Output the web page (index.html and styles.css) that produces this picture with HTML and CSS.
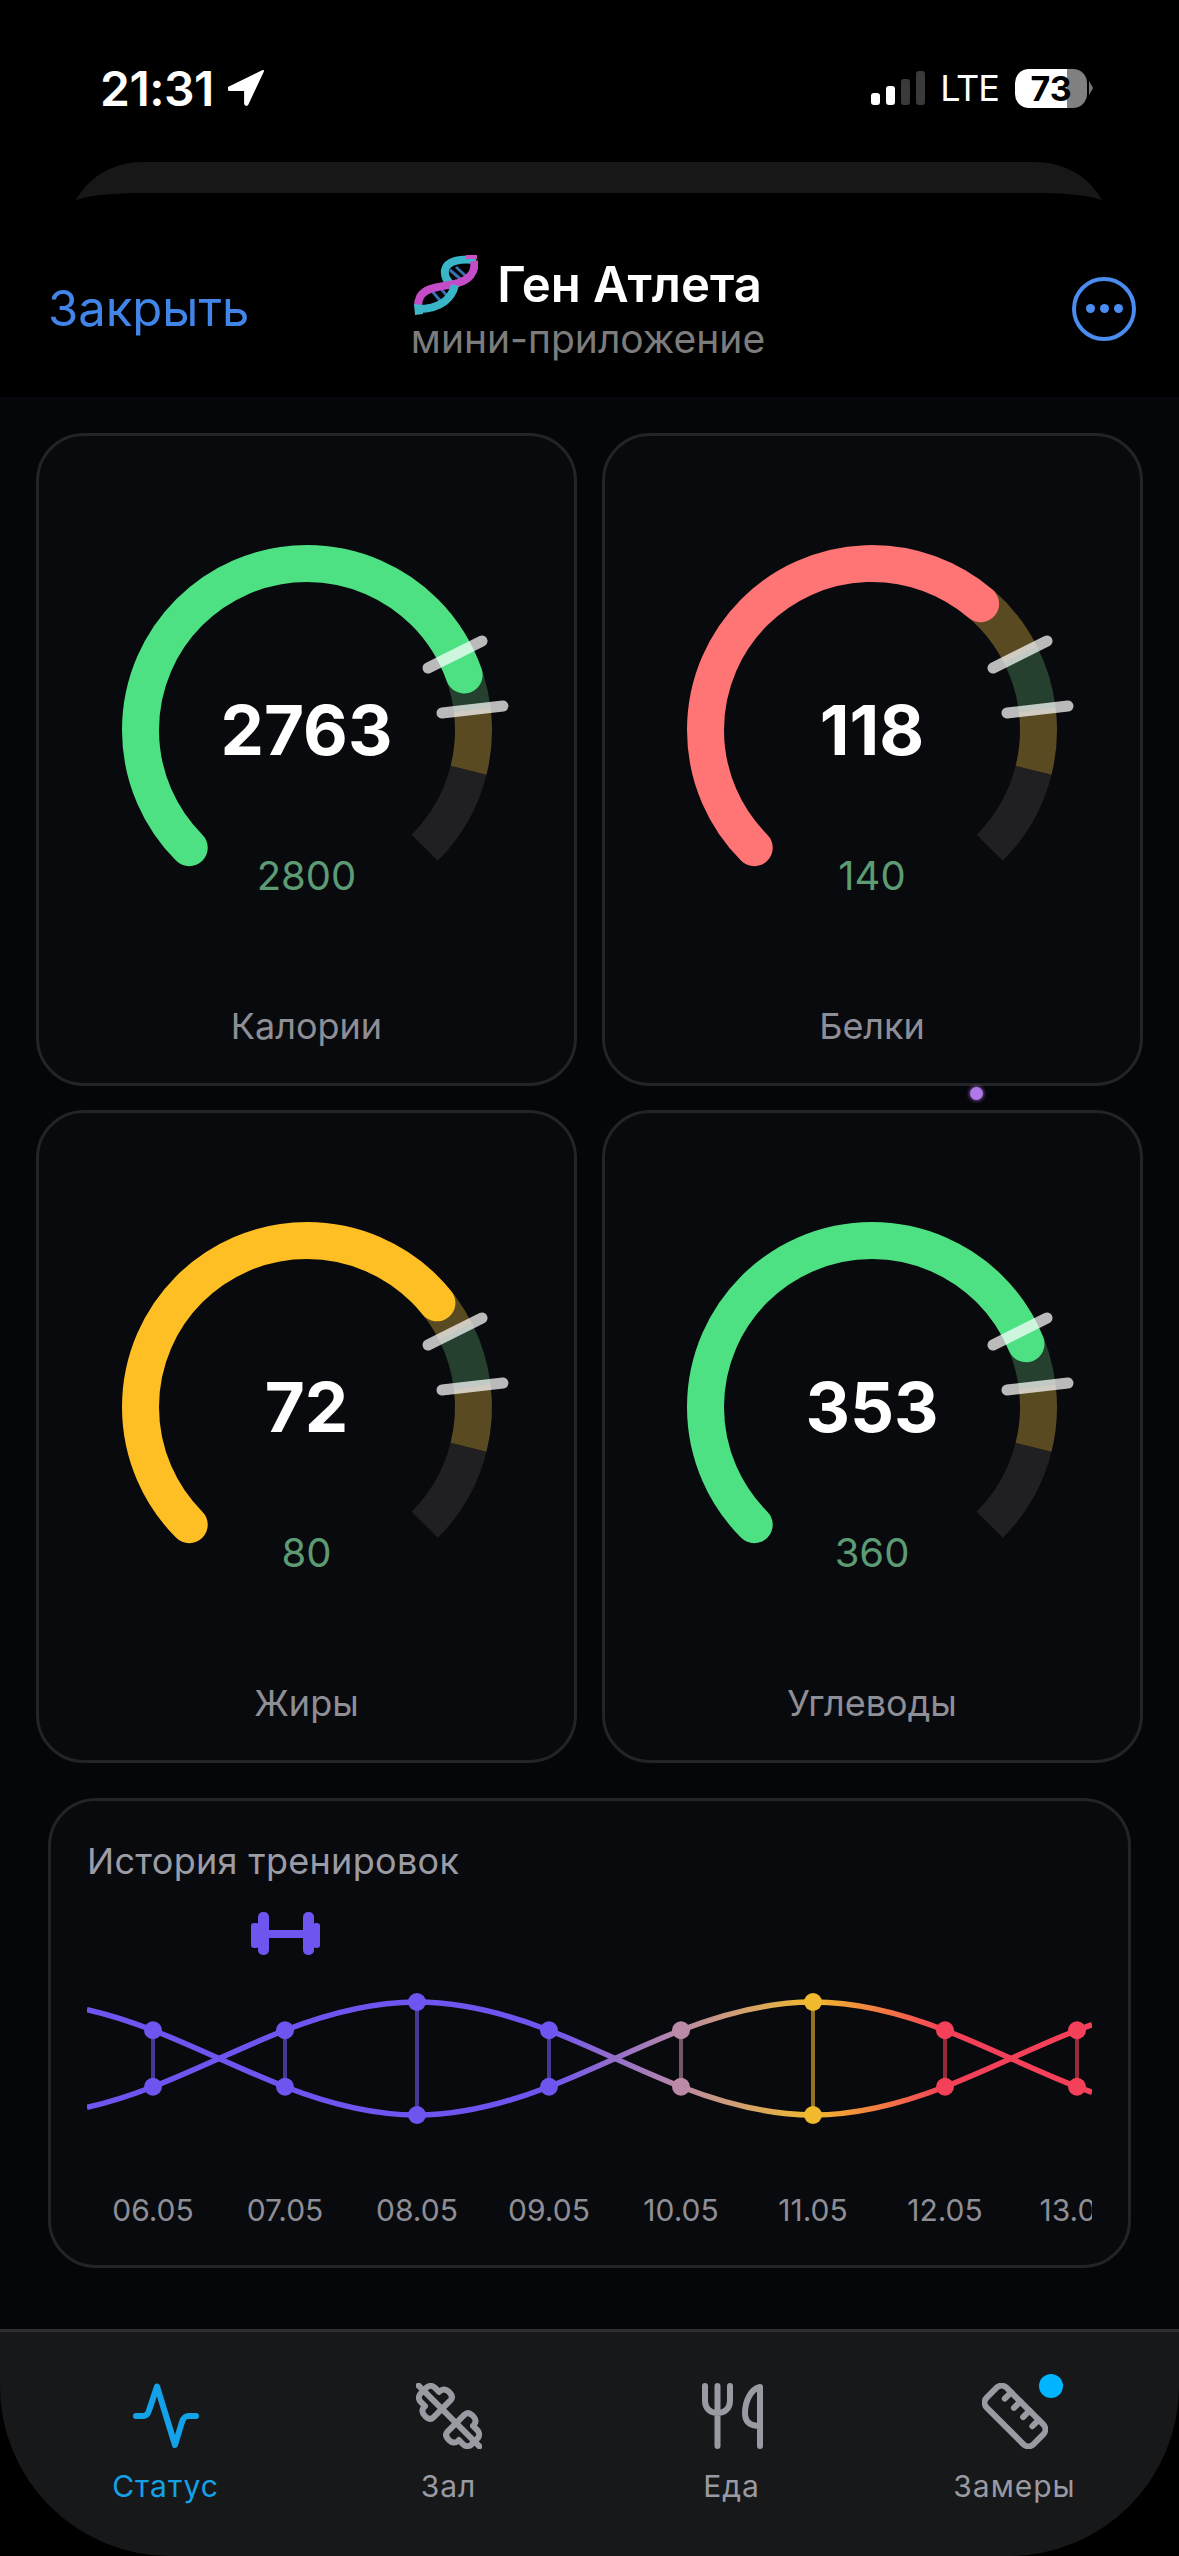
FILE: index.html
```html
<!DOCTYPE html>
<html lang="ru">
<head>
  <meta charset="UTF-8">
  <meta name="viewport" content="width=device-width, initial-scale=1.0">
  <title>Ген Атлета</title>
  <link rel="stylesheet" href="styles.css">
</head>
<body>
  <svg class="defs" width="0" height="0" aria-hidden="true">
    <defs>
      <g id="gauge-track">
        <circle class="arc arc-gray" r="166.5" pathLength="360" stroke-dasharray="31 360" transform="rotate(374)"/>
        <circle class="arc arc-brown" r="166.5" pathLength="360" stroke-dasharray="34 360" transform="rotate(300)"/>
        <circle class="arc arc-green" r="166.5" pathLength="360" stroke-dasharray="20 360" transform="rotate(333)"/>
        <circle class="arc arc-brown" r="166.5" pathLength="360" stroke-dasharray="21 360" transform="rotate(353)"/>
      </g>
      <g id="gauge-ticks">
        <line class="tick" x1="121" y1="-62" x2="175" y2="-89"/>
        <line class="tick" x1="135" y1="-17" x2="196" y2="-24"/>
      </g>
    </defs>
  </svg>

  <div class="status">
    <div class="status-left">
      <span class="time">21:31</span>
      <svg class="arrow" viewBox="0 0 36 36" width="36" height="36"><path d="M35 1 19.500 34c-.6 1.400-2.400 1-2.400-.4V20H2c-1.600 0-2-1.800-.6-2.500Z"/></svg>
    </div>
    <div class="status-right">
      <div class="bars">
        <span class="bar bar-1"></span>
        <span class="bar bar-2"></span>
        <span class="bar bar-3"></span>
        <span class="bar bar-4"></span>
      </div>
      <span class="lte">LTE</span>
      <div class="battery">73</div>
      <span class="battery-tip"></span>
    </div>
  </div>

  <svg class="peek" viewBox="0 0 1026 38" width="1026" height="38"><path d="M0 38C15 12 40 0 68 0H958C986 0 1011 12 1026 38C1010 33 990 31 960 31H66C36 31 16 33 0 38Z"/></svg>

  <header class="header">
    <a class="close">Закрыть</a>
    <div class="title-box">
      <div class="title-row">
        <svg class="dna" viewBox="0 0 64 60" width="64" height="60">
          <path class="dna-rung" d="M36 15 50 27M42 12 55 24M18 36 29 49M26 33 37 45"/>
          <path class="dna-teal" d="M62 5C46 3 33 6 31 15C30 22 34 27 38 30"/>
          <path class="dna-pink" d="M60 6C62 18 54 25 44 28C30 32 12 31 6 42C4 46 4 49 4 52"/>
          <path class="dna-teal" d="M41 30C38 42 28 54 4 54"/>
          <path class="dna-end-pink" d="M52 0H63V4H52Z"/>
          <path class="dna-end-teal" d="M0 49 8 50 9 59 1 60Z"/>
        </svg>
        <span class="title">Ген Атлета</span>
      </div>
      <div class="subtitle">мини-приложение</div>
    </div>
    <div class="more">
      <span class="more-dot"></span>
      <span class="more-dot"></span>
      <span class="more-dot"></span>
    </div>
  </header>

  <main class="main">
    <section class="cards">
      <div class="card">
        <div class="gauge">
          <svg class="gauge-svg" viewBox="-210 -210 420 420" width="420" height="420">
            <use href="#gauge-track"/>
            <circle class="arc value green" r="166.5" pathLength="360" stroke-dasharray="205.700 360" transform="rotate(135)"/>
            <use href="#gauge-ticks"/>
          </svg>
          <div class="gauge-value">2763</div>
          <div class="gauge-target">2800</div>
        </div>
        <div class="card-label">Калории</div>
      </div>
      <div class="card">
        <div class="gauge">
          <svg class="gauge-svg" viewBox="-210 -210 420 420" width="420" height="420">
            <use href="#gauge-track"/>
            <circle class="arc value red" r="166.5" pathLength="360" stroke-dasharray="175.700 360" transform="rotate(135)"/>
            <use href="#gauge-ticks"/>
          </svg>
          <div class="gauge-value">118</div>
          <div class="gauge-target">140</div>
        </div>
        <div class="card-label">Белки</div>
      </div>
      <div class="card">
        <div class="gauge">
          <svg class="gauge-svg" viewBox="-210 -210 420 420" width="420" height="420">
            <use href="#gauge-track"/>
            <circle class="arc value yellow" r="166.5" pathLength="360" stroke-dasharray="186.300 360" transform="rotate(135)"/>
            <use href="#gauge-ticks"/>
          </svg>
          <div class="gauge-value">72</div>
          <div class="gauge-target">80</div>
        </div>
        <div class="card-label">Жиры</div>
      </div>
      <div class="card">
        <div class="gauge">
          <svg class="gauge-svg" viewBox="-210 -210 420 420" width="420" height="420">
            <use href="#gauge-track"/>
            <circle class="arc value green" r="166.5" pathLength="360" stroke-dasharray="202.700 360" transform="rotate(135)"/>
            <use href="#gauge-ticks"/>
          </svg>
          <div class="gauge-value">353</div>
          <div class="gauge-target">360</div>
        </div>
        <div class="card-label">Углеводы</div>
      </div>
      <span class="spark"></span>
    </section>

    <section class="history">
      <div class="history-title">История тренировок</div>
      <svg class="chart" viewBox="0 -85 1005 285" width="1005" height="285">
        <defs>
          <linearGradient id="helix" gradientUnits="userSpaceOnUse" x1="0" y1="0" x2="1005" y2="0">
            <stop offset="0" stop-color="#6f55f0"/>
            <stop offset="0.46" stop-color="#6f55f0"/>
            <stop offset="0.59" stop-color="#b98aa6"/>
            <stop offset="0.722" stop-color="#f0b92e"/>
            <stop offset="0.854" stop-color="#f5405a"/>
            <stop offset="1" stop-color="#f5405a"/>
          </linearGradient>
        </defs>
        <g class="chart-dumbbell">
          <rect x="164" y="-67" width="8" height="25" rx="3"/>
          <rect x="171" y="-78" width="11" height="43" rx="5"/>
          <rect x="181" y="-60" width="36" height="8"/>
          <rect x="216" y="-78" width="11" height="43" rx="5"/>
          <rect x="226" y="-67" width="7" height="25" rx="3"/>
        </g>
        <g class="rungs">
          <line x1="66" y1="40" x2="66" y2="97" stroke="#6f55f0"/>
          <line x1="198" y1="40" x2="198" y2="97" stroke="#6f55f0"/>
          <line x1="330" y1="12" x2="330" y2="125" stroke="#6f55f0"/>
          <line x1="462" y1="40" x2="462" y2="97" stroke="#6f55f0"/>
          <line x1="594" y1="40" x2="594" y2="97" stroke="#b98aa6"/>
          <line x1="726" y1="12" x2="726" y2="125" stroke="#f0b92e"/>
          <line x1="858" y1="40" x2="858" y2="97" stroke="#f5405a"/>
          <line x1="990" y1="40" x2="990" y2="97" stroke="#f5405a"/>
        </g>
        <path class="strand" stroke="url(#helix)" d="M0 117.400C22 112.500 44 105.300 66 96.750C110 79.670 154 57.330 198 40.250C242 23.170 286 12 330 12C374 12 418 23.170 462 40.250C506 57.330 550 79.670 594 96.750C638 113.830 682 125 726 125C770 125 814 113.830 858 96.750C902 79.670 946 57.330 990 40.250L1005 34.700"/>
        <path class="strand" stroke="url(#helix)" d="M0 19.600C22 24.500 44 31.700 66 40.250C110 57.330 154 79.670 198 96.750C242 113.830 286 125 330 125C374 125 418 113.830 462 96.750C506 79.670 550 57.330 594 40.250C638 23.170 682 12 726 12C770 12 814 23.170 858 40.250C902 57.330 946 79.670 990 96.750L1005 102.300"/>
        <g class="nodes" fill="#6f55f0">
          <circle cx="66" cy="40.250" r="9"/><circle cx="66" cy="96.750" r="9"/>
          <circle cx="198" cy="40.250" r="9"/><circle cx="198" cy="96.750" r="9"/>
          <circle cx="330" cy="12" r="9"/><circle cx="330" cy="125" r="9"/>
          <circle cx="462" cy="40.250" r="9"/><circle cx="462" cy="96.750" r="9"/>
        </g>
        <g class="nodes" fill="#bb8aa6">
          <circle cx="594" cy="40.250" r="9"/><circle cx="594" cy="96.750" r="9"/>
        </g>
        <g class="nodes" fill="#f0b92e">
          <circle cx="726" cy="12" r="9"/><circle cx="726" cy="125" r="9"/>
        </g>
        <g class="nodes" fill="#f5405a">
          <circle cx="858" cy="40.250" r="9"/><circle cx="858" cy="96.750" r="9"/>
          <circle cx="990" cy="40.250" r="9"/><circle cx="990" cy="96.750" r="9"/>
        </g>
      </svg>
      <div class="dates">
        <span>06.05</span>
        <span>07.05</span>
        <span>08.05</span>
        <span>09.05</span>
        <span>10.05</span>
        <span>11.05</span>
        <span>12.05</span>
        <span>13.05</span>
      </div>
    </section>
  </main>

  <nav class="tabs">
    <div class="tab active">
      <svg class="tab-icon" viewBox="0 0 66 66" width="66" height="66">
        <path d="M3 33H10C13.500 33 15 31 16 27.500L24 3.500L42 62L49 39C50.500 34.500 52 33 56 33H63"/>
      </svg>
      <span class="tab-label">Статус</span>
    </div>
    <div class="tab">
      <svg class="tab-icon" viewBox="0 0 66 66" width="66" height="66">
        <g transform="rotate(45 33 33)">
          <path d="M43 21C43 17 46 16 50 16C54 16 57 18 57 22V23H63C67 23 69 26 69 29V37C69 40 67 43 63 43H57V44C57 48 54 50 50 50C46 50 43 49 43 45Z"/>
          <path d="M23 21C23 17 20 16 16 16C12 16 9 18 9 22V23H3C-1 23 -3 26 -3 29V37C-3 40 -1 43 3 43H9V44C9 48 12 50 16 50C20 50 23 49 23 45Z"/>
          <path d="M-10 33H76"/>
        </g>
      </svg>
      <span class="tab-label">Зал</span>
    </div>
    <div class="tab">
      <svg class="tab-icon" viewBox="0 0 66 66" width="66" height="66">
        <path d="M6 3V18C6 26 12 30 18.500 30C25 30 31 26 31 18V3M18.500 3V63"/>
        <path d="M61 63V4C52 6 46 18 46 30C46 38 50 43 61 43"/>
      </svg>
      <span class="tab-label">Еда</span>
    </div>
    <div class="tab">
      <svg class="tab-icon" viewBox="0 0 66 66" width="66" height="66">
        <g transform="rotate(45 33 33)">
          <rect x="0" y="19" width="66" height="28" rx="7"/>
          <path d="M13.500 19V28M26.500 19V28M39.500 19V28M52.500 19V28"/>
        </g>
      </svg>
      <span class="tab-label">Замеры</span>
      <span class="badge"></span>
    </div>
  </nav>
</body>
</html>
```

FILE: styles.css
```css
body {
  margin: 0;
  width: 1179px;
  height: 2556px;
  overflow: hidden;
  display: flex;
  flex-direction: column;
  background-color: #000;
  color: #fff;
  font-family: Inter, "Noto Sans", sans-serif;
}
.defs {
  display: none;
}

/* status bar */
.status {
  height: 100px;
  padding: 62px 86px 0 100px;
  display: flex;
  justify-content: space-between;
  flex-shrink: 0;
}
.status-left, .status-right {
  height: 52px;
  display: flex;
  align-items: center;
}
.time {
  font-size: 48px;
  font-weight: 600;
  letter-spacing: -0.5px;
}
.arrow {
  margin-left: 14px;
  fill: #fff;
  stroke: #fff;
  stroke-width: 2;
  stroke-linejoin: round;
}
.bars {
  display: flex;
  align-items: flex-end;
  gap: 6px;
  height: 34px;
}
.bar {
  width: 9px;
  border-radius: 3px;
  background-color: #3a3a3a;
}
.bar-1 {
  height: 12px;
  background-color: #fff;
}
.bar-2 {
  height: 19px;
  background-color: #fff;
}
.bar-3 {
  height: 26px;
}
.bar-4 {
  height: 34px;
}
.lte {
  margin-left: 15px;
  font-size: 36px;
  letter-spacing: -1px;
}
.battery {
  margin-left: 16px;
  width: 72px;
  height: 39px;
  border-radius: 14px;
  background: linear-gradient(to right, #fff 72%, #808080 72%);
  color: #000;
  font-size: 34px;
  font-weight: 700;
  line-height: 39px;
  text-align: center;
}
.battery-tip {
  margin-left: 2px;
  border-left: 4px solid #777;
  border-top: 7px solid transparent;
  border-bottom: 7px solid transparent;
}

/* sheet behind */
.peek {
  display: block;
  margin-left: 76px;
  flex-shrink: 0;
  fill: #171717;
}

/* header */
.header {
  height: 177px;
  padding: 20px 51px 0 48px;
  display: grid;
  grid-template-columns: 1fr auto 1fr;
  align-items: center;
  flex-shrink: 0;
  background-color: #000;
}
.close {
  font-size: 49px;
  color: #4285e8;
}
.title-box {
  display: flex;
  flex-direction: column;
  align-items: center;
}
.title-row {
  display: flex;
  align-items: center;
  gap: 19px;
  height: 60px;
}
.title {
  font-size: 49px;
  font-weight: 600;
}
.subtitle {
  font-size: 39px;
  line-height: 48px;
  color: #7c7c7c;
}
.dna {
  fill: none;
}
.dna-teal {
  stroke: #38b6c8;
  stroke-width: 8;
  fill: none;
}
.dna-pink {
  stroke: #c54cc9;
  stroke-width: 8;
  fill: none;
}
.dna-rung {
  stroke: #3a6fb0;
  stroke-width: 3;
}
.dna-end-teal {
  fill: #3fb6c4;
}
.dna-end-pink {
  fill: #c952c6;
}
.more {
  justify-self: end;
  margin-right: -8px;
  width: 64px;
  height: 64px;
  box-sizing: border-box;
  border: 4px solid #4a8cf0;
  border-radius: 50%;
  display: flex;
  align-items: center;
  justify-content: center;
  gap: 5px;
}
.more-dot {
  width: 9px;
  height: 9px;
  border-radius: 50%;
  background-color: #4a8cf0;
}

/* main content */
.main {
  flex: 1;
  padding: 36px 36px 0;
  background-color: #05060a;
}
.cards {
  position: relative;
  display: grid;
  grid-template-columns: 541px 541px;
  grid-auto-rows: 653px;
  gap: 24px 24.5px;
}
.card {
  box-sizing: border-box;
  padding-top: 84px;
  border: 3px solid #232427;
  border-radius: 48px;
  background-color: #090a0d;
  display: flex;
  flex-direction: column;
  align-items: center;
}
.gauge {
  position: relative;
  width: 420px;
  height: 420px;
}
.gauge-svg {
  display: block;
}
.arc {
  fill: none;
  stroke-width: 37;
}
.arc-gray {
  stroke: #202022;
}
.arc-brown {
  stroke: #5a4a22;
}
.arc-green {
  stroke: #25402f;
}
.value {
  stroke-linecap: round;
}
.green {
  stroke: #4de184;
}
.red {
  stroke: #ff7474;
}
.yellow {
  stroke: #fdbf24;
}
.tick {
  stroke: rgba(255, 255, 255, 0.72);
  stroke-width: 11;
  stroke-linecap: round;
}
.gauge-value {
  position: absolute;
  left: 0;
  right: 0;
  top: 0;
  line-height: 420px;
  text-align: center;
  font-size: 69px;
  font-weight: 700;
}
.gauge-target {
  position: absolute;
  left: 0;
  right: 0;
  top: 332px;
  line-height: 48px;
  text-align: center;
  font-size: 40px;
  color: #5c9b74;
}
.card-label {
  margin-top: 64px;
  font-size: 36px;
  line-height: 44px;
  color: #8e8e96;
}
.spark {
  position: absolute;
  left: 934px;
  top: 654px;
  width: 13px;
  height: 13px;
  border-radius: 50%;
  background-color: #b078e8;
  box-shadow: 0 0 4px #b078e8;
}

/* history */
.history {
  box-sizing: border-box;
  width: 1083px;
  height: 470px;
  margin: 35px 0 0 12px;
  padding: 38px 36px 0;
  border: 3px solid #232427;
  border-radius: 48px;
  background-color: #090a0d;
}
.history-title {
  font-size: 36px;
  line-height: 44px;
  letter-spacing: 0.3px;
  color: #9c9ca6;
}
.chart {
  display: block;
  margin-top: 22px;
  filter: blur(0.7px);
}
.chart-dumbbell {
  fill: #6f55f0;
}
.rungs line {
  stroke-width: 4;
  opacity: 0.6;
}
.strand {
  fill: none;
  stroke-width: 5.5;
}
.dates {
  width: 1005px;
  overflow: hidden;
  display: grid;
  grid-auto-flow: column;
  grid-auto-columns: 132px;
  font-size: 30px;
  line-height: 40px;
  text-align: center;
  color: #8e8e96;
}

/* tab bar */
.tabs {
  box-sizing: border-box;
  height: 227px;
  padding: 51px 23px 0 24px;
  flex-shrink: 0;
  display: grid;
  grid-template-columns: repeat(4, 283px);
  border-top: 3px solid #2e2e32;
  border-radius: 0 0 170px 170px;
  background-color: #17181a;
}
.tab {
  position: relative;
  display: flex;
  flex-direction: column;
  align-items: center;
  color: #9a9aa2;
}
.tab-icon {
  fill: none;
  stroke: currentColor;
  stroke-width: 6;
  stroke-linecap: round;
  stroke-linejoin: round;
}
.tab-label {
  margin-top: 17px;
  font-size: 30px;
  line-height: 40px;
  letter-spacing: 1px;
}
.active {
  color: #13a2e8;
}
.badge {
  position: absolute;
  left: 166px;
  top: -9px;
  width: 24px;
  height: 24px;
  border-radius: 50%;
  background-color: #00b4ff;
}
```
